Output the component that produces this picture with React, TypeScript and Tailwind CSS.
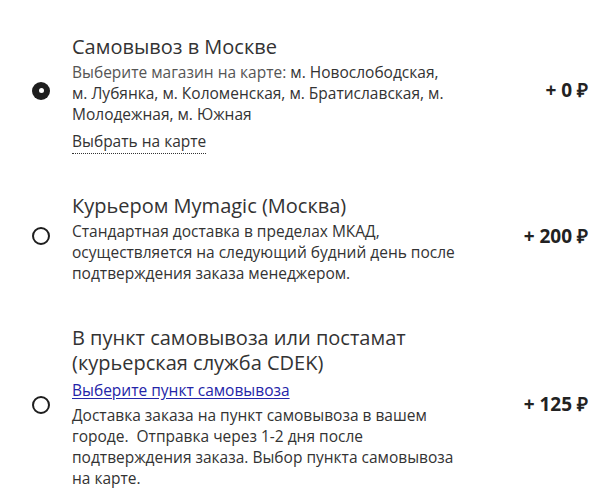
const options = [
  {
    id: 'pickup',
    title: ['Самовывоз в Москве'],
    label: 'Выберите магазин на карте:',
    text: 'м. Новослободская, м. Лубянка, м. Коломенская, м. Братиславская, м. Молодежная, м. Южная',
    mapLink: 'Выбрать на карте',
    price: '+ 0 ₽',
    checked: true,
  },
  {
    id: 'courier',
    title: ['Курьером Mymagic (Москва)'],
    text: 'Стандартная доставка в пределах МКАД, осуществляется на следующий будний день после подтверждения заказа менеджером.',
    price: '+ 200 ₽',
  },
  {
    id: 'cdek',
    title: ['В пункт самовывоза или постамат', '(курьерская служба CDEK)'],
    pointLink: 'Выберите пункт самовывоза',
    text: 'Доставка заказа на пункт самовывоза в вашем городе.\u00a0 Отправка через 1-2 дня после подтверждения заказа. Выбор пункта самовывоза на карте.',
    price: '+ 125 ₽',
  },
];

export default function App() {
  return (
    <div className="min-h-[501px] bg-white pl-[32px] pr-[18px] pt-[34px] font-['Open_Sans',sans-serif] text-[#333]">
      <div className="flex flex-col gap-[41px]">
        {options.map((o) => (
          <label key={o.id} className="flex cursor-pointer items-center">
            {/* Radio */}
            {o.checked ? (
              <span className="mb-[5px] flex h-[18px] w-[18px] shrink-0 items-center justify-center rounded-full bg-[#1e1e1e]">
                <span className="h-[5px] w-[5px] rounded-full bg-white" />
              </span>
            ) : (
              <span className="mb-[5px] h-[18px] w-[18px] shrink-0 rounded-full border-2 border-[#1e1e1e] bg-white" />
            )}

            <div className="ml-[22px] w-[385px]">
              <div className="text-[20px] leading-[25px]">
                {o.title.map((t) => (
                  <div key={t}>{t}</div>
                ))}
              </div>
              {o.pointLink && (
                <div className="mt-[5px] text-[15.5px] leading-[21px]">
                  <a href="#" className="text-[#2424a8] underline underline-offset-2">{o.pointLink}</a>
                </div>
              )}
              <p className={`${o.pointLink ? 'mt-[4px]' : 'mt-[3px]'} text-[15.5px] leading-[21px]`}>
                {o.label && <span className="text-[#555]">{o.label} </span>}
                {o.text}
              </p>
              {o.mapLink && (
                <div className="mt-[6px] text-[15.5px] leading-[21px]">
                  <span className="border-b border-dotted border-[#333] pb-[1px]">{o.mapLink}</span>
                </div>
              )}
            </div>

            <div className="mb-[5px] flex-1 text-right text-[19px] font-bold text-[#222]">{o.price}</div>
          </label>
        ))}
      </div>
    </div>
  );
}
